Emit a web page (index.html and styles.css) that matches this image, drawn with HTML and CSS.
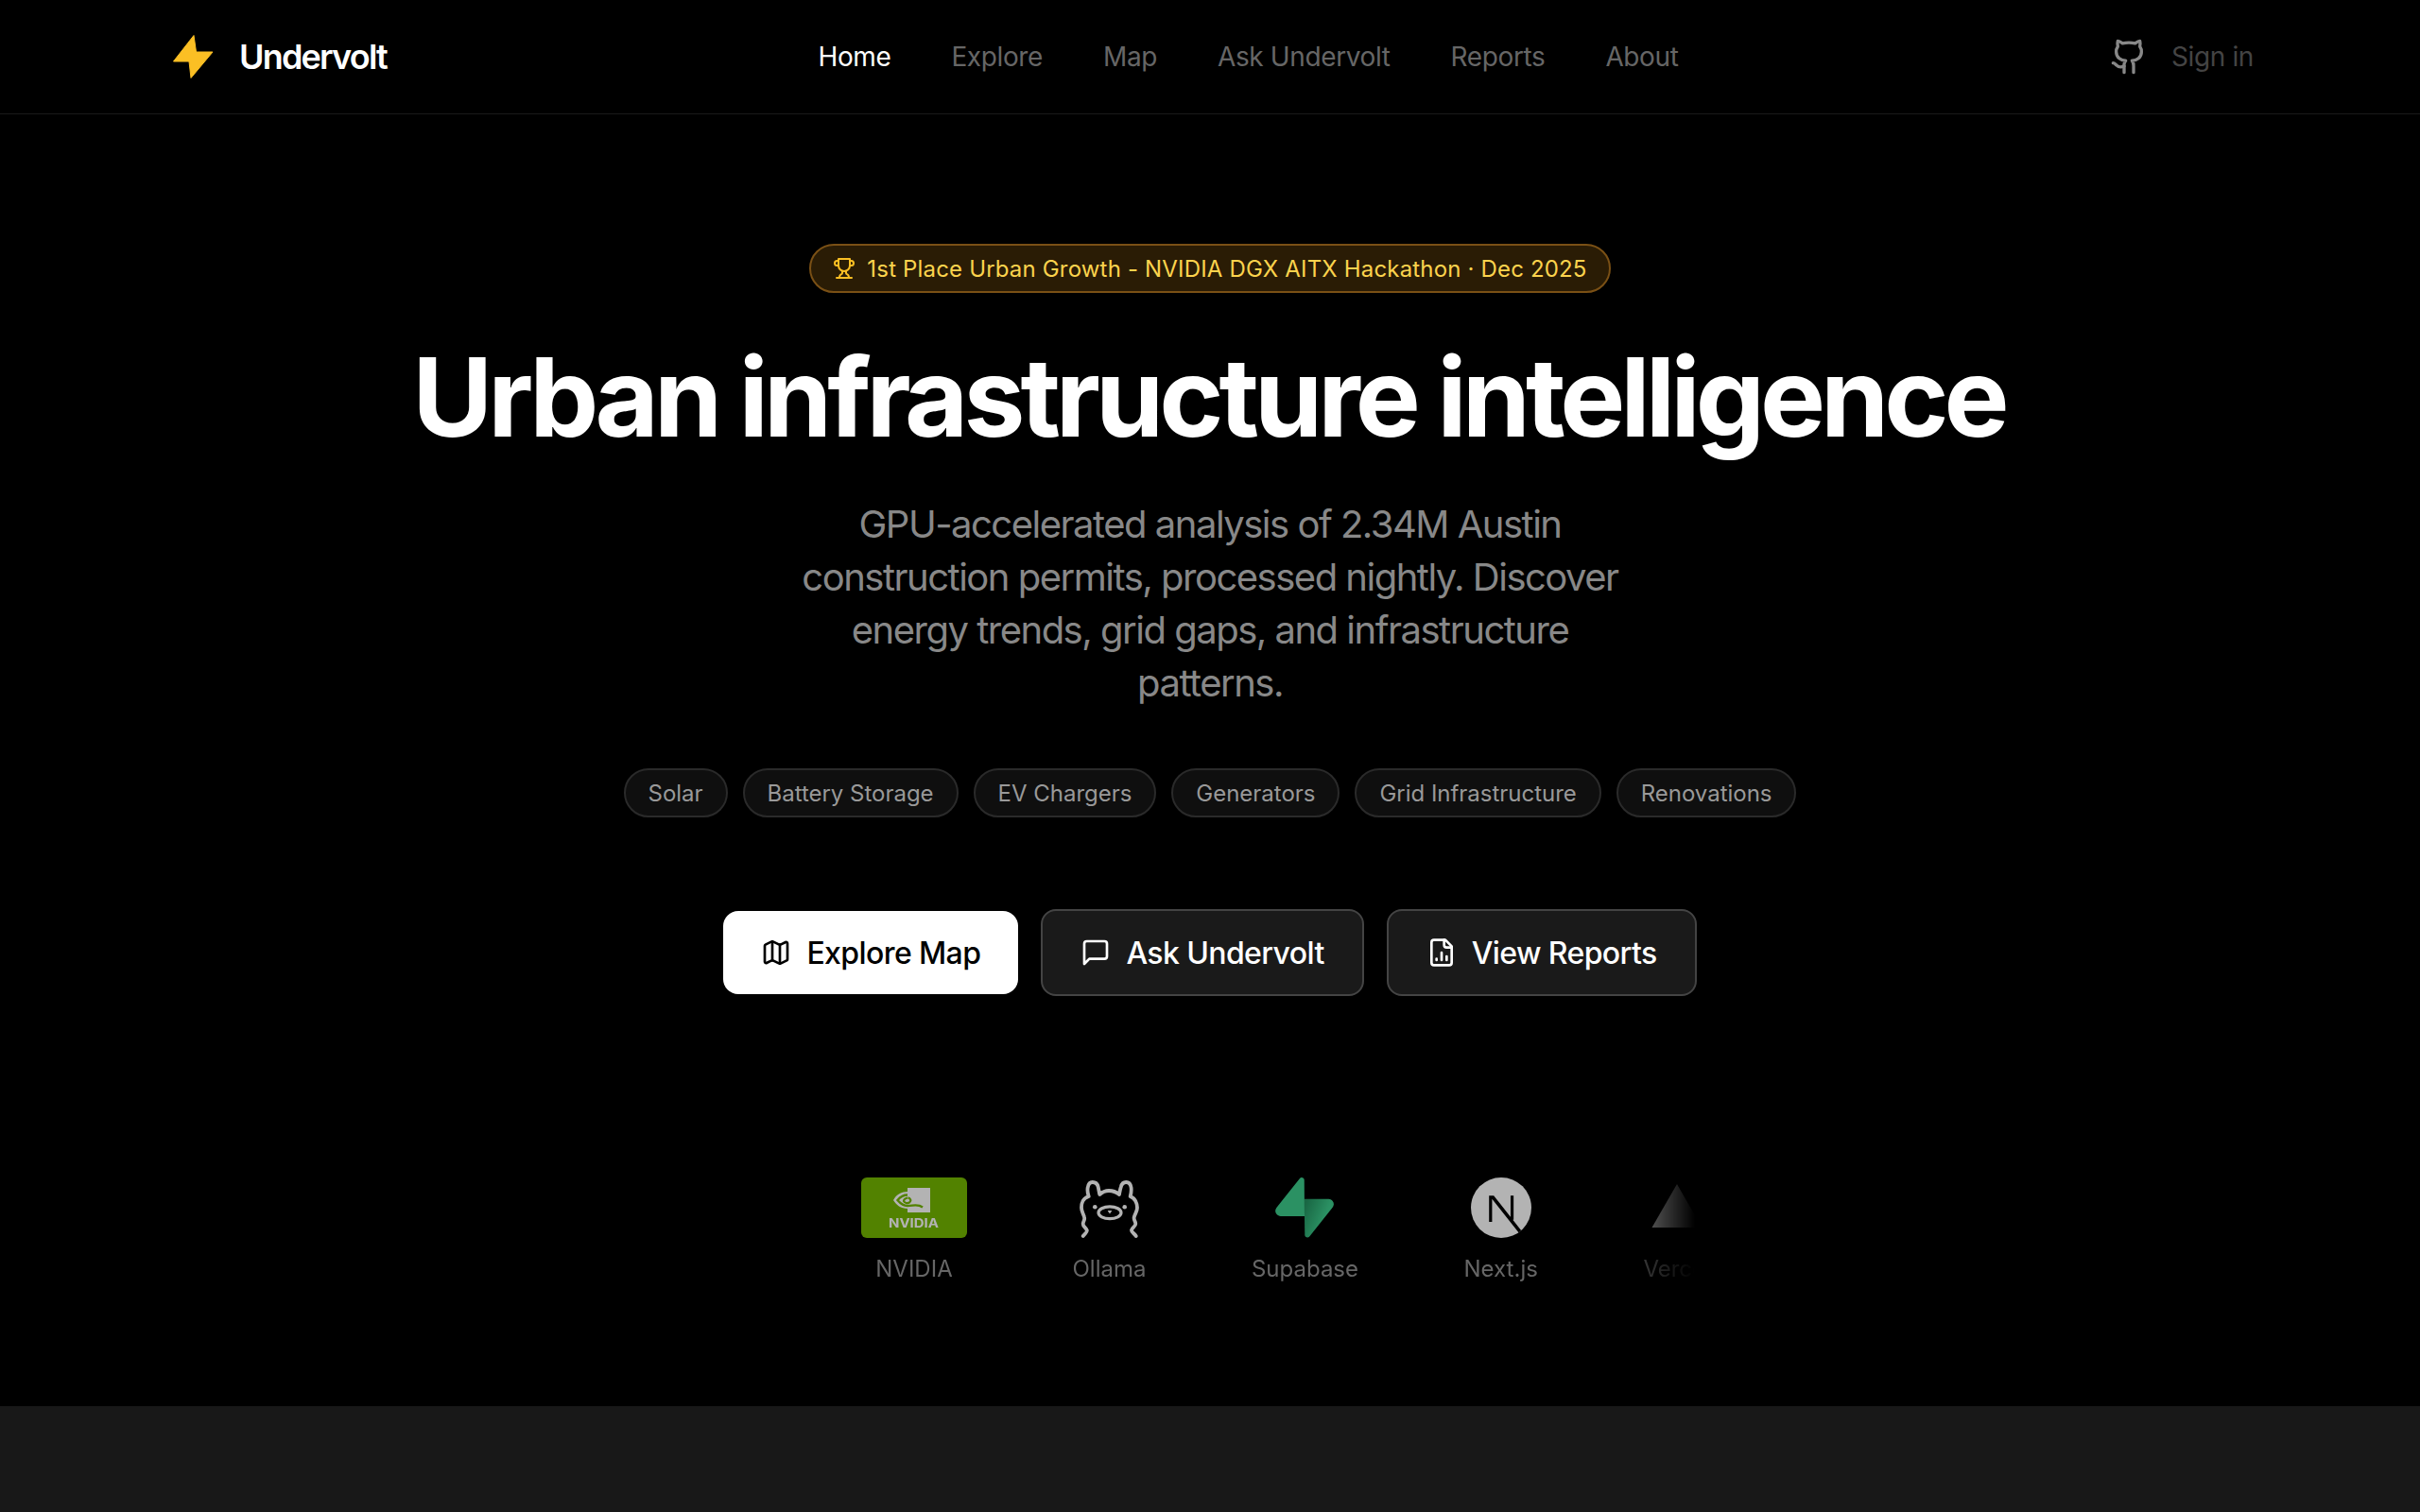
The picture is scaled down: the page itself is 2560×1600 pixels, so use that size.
FILE: index.html
```html
<!DOCTYPE html>
<html lang="en">
<head>
<meta charset="utf-8">
<title>Undervolt</title>
<link rel="stylesheet" href="styles.css">
</head>
<body>
<header class="topbar">
  <a class="brand" href="#">
    <svg class="brand-bolt" viewBox="0 0 44 46"><path d="M22 0.5 L0.5 28 H17 L19 45.5 L42 18 H24.5 Z" fill="#fbbf24" stroke="#fbbf24" stroke-width="1" stroke-linejoin="round"/></svg>
    <span class="brand-name">Undervolt</span>
  </a>
  <nav class="nav">
    <a class="nav-link active" href="#">Home</a>
    <a class="nav-link" href="#">Explore</a>
    <a class="nav-link" href="#">Map</a>
    <a class="nav-link" href="#">Ask Undervolt</a>
    <a class="nav-link" href="#">Reports</a>
    <a class="nav-link" href="#">About</a>
  </nav>
  <div class="top-actions">
    <svg class="icon-git" viewBox="0 0 24 24"><path d="M15 22v-4a4.8 4.8 0 0 0-1-3.5c3 0 6-2 6-5.5.08-1.25-.27-2.48-1-3.5.28-1.15.28-2.35 0-3.5 0 0-1 0-3 1.5-2.64-.5-5.36-.5-8 0C6 2 5 2 5 2c-.3 1.15-.3 2.35 0 3.5A5.403 5.403 0 0 0 4 9c0 3.5 3 5.5 6 5.5-.39.49-.68 1.05-.85 1.65-.17.6-.22 1.23-.15 1.85v4"/><path d="M9 18c-4.51 2-5-2-7-2"/></svg>
    <span class="sign-in">Sign in</span>
  </div>
</header>

<main class="hero">
  <div class="award">
    <svg class="icon-trophy" viewBox="0 0 24 24"><path d="M6 9H4.5a2.5 2.5 0 0 1 0-5H6"/><path d="M18 9h1.5a2.5 2.5 0 0 0 0-5H18"/><path d="M4 22h16"/><path d="M10 14.66V17c0 .55-.47.98-.97 1.21C7.85 18.75 7 20.24 7 22"/><path d="M14 14.66V17c0 .55.47.98.97 1.21C16.15 18.75 17 20.24 17 22"/><path d="M18 2H6v7a6 6 0 0 0 12 0V2Z"/></svg>
    <span>1st Place Urban Growth - NVIDIA DGX AITX Hackathon · Dec 2025</span>
  </div>
  <h1 class="title">Urban infrastructure intelligence</h1>
  <p class="lede">GPU-accelerated analysis of 2.34M Austin construction permits, processed nightly. Discover energy trends, grid gaps, and infrastructure patterns.</p>
  <div class="tags">
    <span class="tag">Solar</span>
    <span class="tag">Battery Storage</span>
    <span class="tag">EV Chargers</span>
    <span class="tag">Generators</span>
    <span class="tag">Grid Infrastructure</span>
    <span class="tag">Renovations</span>
  </div>
  <div class="cta-row">
    <a class="cta cta-primary" href="#">
      <svg class="cta-icon" viewBox="0 0 24 24"><path d="M14.106 5.553a2 2 0 0 0 1.788 0l3.659-1.83A1 1 0 0 1 21 4.619v12.764a1 1 0 0 1-.553.894l-4.553 2.277a2 2 0 0 1-1.788 0l-4.212-2.106a2 2 0 0 0-1.788 0l-3.659 1.83A1 1 0 0 1 3 19.381V6.618a1 1 0 0 1 .553-.894l4.553-2.277a2 2 0 0 1 1.788 0z"/><path d="M15 5.764v15"/><path d="M9 3.236v15"/></svg>
      Explore Map
    </a>
    <a class="cta cta-secondary" href="#">
      <svg class="cta-icon" viewBox="0 0 24 24"><path d="M21 15a2 2 0 0 1-2 2H7l-4 4V5a2 2 0 0 1 2-2h14a2 2 0 0 1 2 2z"/></svg>
      Ask Undervolt
    </a>
    <a class="cta cta-secondary" href="#">
      <svg class="cta-icon" viewBox="0 0 24 24"><path d="M15 2H6a2 2 0 0 0-2 2v16a2 2 0 0 0 2 2h12a2 2 0 0 0 2-2V7Z"/><path d="M14 2v4a2 2 0 0 0 2 2h4"/><path d="M8 18v-1"/><path d="M12 18v-6"/><path d="M16 18v-3"/></svg>
      View Reports
    </a>
  </div>
  <div class="marquee">
    <div class="marquee-track">
      <div class="stack-item">
        <svg class="stack-logo logo-nvidia" viewBox="0 0 112 64">
          <rect width="112" height="64" rx="6" fill="#76b900"/>
          <path d="M49 11 H73 V37 H49 V33 C42 33 37 29 34 24 C37 18 43 15 49 15 Z" fill="#fff"/>
          <path d="M49 18.5 C44.5 18.5 41 21 38.5 24 C41 27 44.5 30 49 30 C55 30 60 27.5 65 31.5" fill="none" stroke="#76b900" stroke-width="2.4"/>
          <path d="M49 21.5 C46.5 22 45 23.5 45 25 C46 27 49 27.8 51 26.5 C53.5 24.5 52 21.8 49.5 21.3" fill="none" stroke="#76b900" stroke-width="2.2"/>
          <text x="29" y="52.5" textLength="53" lengthAdjust="spacingAndGlyphs" class="nvidia-word">NVIDIA</text>
        </svg>
        <span class="stack-name">NVIDIA</span>
      </div>
      <div class="stack-item">
        <svg class="stack-logo logo-square" viewBox="0 0 64 64" fill="none" stroke="#fff" stroke-width="3.8" stroke-linecap="round" stroke-linejoin="round">
          <path d="M4.7 62 C7 59 9.5 58 8.7 55.7 C8 53 4.5 52 4.7 49 C4.8 46 7 45 6 42 C5 38 3 36 3 32 C3 30 3 28 4 26 C5 23 8 21 10.7 20 C9.7 17 9 14 9.7 10.7 C10.3 7 12 5 14.7 5 C17.5 5 20 7 20.7 10 C21.3 12.5 21.5 15 22.3 18 C25 15.5 28.5 14 32 14 C36 14 40 15.5 43 18 C43.6 15 44 12 44.8 10 C45.5 7 47.5 5 50.3 5 C53 5 55 7 55.6 10.7 C56 14 55.5 17 54.7 20 C57 21 59.5 23 60.7 26 C61.7 28 62 30 62 32 C62 36 59.7 38 58.7 42 C58 45 60.2 46 60.3 49 C60.4 52 56.5 53 56 55.7 C55.7 58 59 59 60.7 62"/>
          <ellipse cx="33" cy="37.3" rx="12" ry="6.4" stroke-width="3.2"/>
          <path d="M31.5 35.5 H34.5 L33 37.5 Z" fill="#fff" stroke-width="1.2"/>
          <circle cx="17.3" cy="31.3" r="2.3" fill="#fff" stroke="none"/>
          <circle cx="48.7" cy="31.3" r="2.3" fill="#fff" stroke="none"/>
        </svg>
        <span class="stack-name">Ollama</span>
      </div>
      <div class="stack-item">
        <svg class="stack-logo logo-square" viewBox="0 0 109 113">
          <defs><linearGradient id="supa" x1="54" y1="55" x2="94" y2="71" gradientUnits="userSpaceOnUse"><stop offset="0" stop-color="#249361"/><stop offset="1" stop-color="#3ecf8e"/></linearGradient></defs>
          <path d="M63.7076 110.284C60.8481 113.885 55.0502 111.912 54.9813 107.314L53.9738 40.0627L99.1935 40.0627C107.384 40.0627 111.952 49.5228 106.859 55.9374L63.7076 110.284Z" fill="url(#supa)"/>
          <path d="M45.317 2.07103C48.1765 -1.53037 53.9745 0.442937 54.0434 5.041L54.4849 72.2922H9.83113C1.64038 72.2922 -2.92775 62.8321 2.1655 56.4175L45.317 2.07103Z" fill="#3ecf8e"/>
        </svg>
        <span class="stack-name">Supabase</span>
      </div>
      <div class="stack-item">
        <svg class="stack-logo logo-square" viewBox="0 0 180 180">
          <circle cx="90" cy="90" r="90" fill="#fff"/>
          <path d="M149.5 157.5 L68 54 H54 V132 H63 V64 L142 164 Z" fill="#000"/>
          <rect x="118" y="54" width="9" height="72" fill="#000"/>
        </svg>
        <span class="stack-name">Next.js</span>
      </div>
      <div class="stack-item">
        <svg class="stack-logo logo-square" viewBox="0 0 64 64"><path d="M32 7 L58.5 53 H5.5 Z" fill="#fff"/></svg>
        <span class="stack-name">Vercel</span>
      </div>
    </div>
  </div>
</main>
<section class="next-section"></section>
</body>
</html>
```

FILE: styles.css
```css
* { box-sizing: border-box; }
html, body { margin: 0; height: 1600px; overflow: hidden; background: #000; }
body { font-family: Inter, "Liberation Sans", sans-serif; color: #fff; }
a { color: inherit; text-decoration: none; }
svg { display: block; flex: none; }

.topbar {
  height: 121px;
  border-bottom: 1px solid #1a1a1a;
  padding: 0 176px 0 183px;
  display: flex;
  align-items: center;
  justify-content: space-between;
}
.brand { display: flex; align-items: center; gap: 26px; }
.brand-bolt { width: 44px; height: 46px; }
.brand-name { font-size: 36px; font-weight: 600; letter-spacing: -1.8px; }
.nav { display: flex; gap: 64px; font-size: 28px; letter-spacing: -0.38px; }
.nav-link { color: #666; }
.nav-link.active { color: #fff; }
.top-actions { display: flex; align-items: center; gap: 25px; }
.icon-git { width: 40px; height: 40px; fill: none; stroke: #888; stroke-width: 2; stroke-linecap: round; stroke-linejoin: round; }
.sign-in { font-size: 28px; letter-spacing: -0.38px; color: #444; }

.hero {
  height: 1367px;
  padding-top: 137px;
  display: flex;
  flex-direction: column;
  align-items: center;
}
.award {
  display: flex;
  align-items: center;
  gap: 12px;
  height: 52px;
  padding: 0 23px;
  border: 2px solid #7a5015;
  border-radius: 26px;
  background: #2a1c05;
  color: #fcd34d;
  font-size: 24px;
  letter-spacing: 0.17px;
}
.icon-trophy { width: 24px; height: 24px; fill: none; stroke: #fbbf24; stroke-width: 2; stroke-linecap: round; stroke-linejoin: round; }
.title {
  margin: 50px 3px 0 0;
  font-size: 116px;
  line-height: 120px;
  font-weight: 700;
  letter-spacing: -5px;
  color: #fff;
  white-space: nowrap;
}
.lede {
  margin: 47px 0 0;
  width: 896px;
  font-size: 40px;
  line-height: 56px;
  letter-spacing: -1.5px;
  text-align: center;
  color: #888;
}
.tags { display: flex; gap: 16px; margin-top: 62px; }
.tag {
  display: flex;
  align-items: center;
  height: 52px;
  padding: 0 24px;
  border: 2px solid #2a2a2a;
  border-radius: 26px;
  background: #0f0f0f;
  color: #999;
  font-size: 24px;
  letter-spacing: -0.02px;
}
.cta-row { display: flex; gap: 24px; align-items: center; margin-top: 97px; }
.cta {
  display: flex;
  align-items: center;
  gap: 16px;
  height: 88px;
  padding: 0 40px;
  border-radius: 16px;
  font-size: 32px;
  font-weight: 500;
  letter-spacing: -0.6px;
}
.cta-primary { background: #fff; color: #000; }
.cta-secondary { height: 92px; background: #1a1a1a; border: 2px solid #444; color: #fff; }
.cta-icon { width: 32px; height: 32px; fill: none; stroke: currentColor; stroke-width: 2; stroke-linecap: round; stroke-linejoin: round; }

.marquee {
  align-self: flex-start;
  margin: 192px 0 0 767px;
  width: 1026px;
  padding-left: 144px;
  overflow: hidden;
  -webkit-mask-image: linear-gradient(to right, #000 90%, transparent 100%);
  mask-image: linear-gradient(to right, #000 90%, transparent 100%);
}
.marquee-track { display: flex; gap: 111.5px; }
.stack-item { display: flex; flex-direction: column; align-items: center; gap: 17px; flex: none; }
.stack-logo { height: 64px; opacity: 0.7; }
.logo-nvidia { width: 112px; }
.logo-square { width: 64px; }
.nvidia-word { font-family: Inter, sans-serif; font-size: 13px; font-weight: 700; fill: #fff; }
.stack-name { font-size: 24px; line-height: 32px; color: #666; }

.next-section { height: 112px; background: #181818; }
```
